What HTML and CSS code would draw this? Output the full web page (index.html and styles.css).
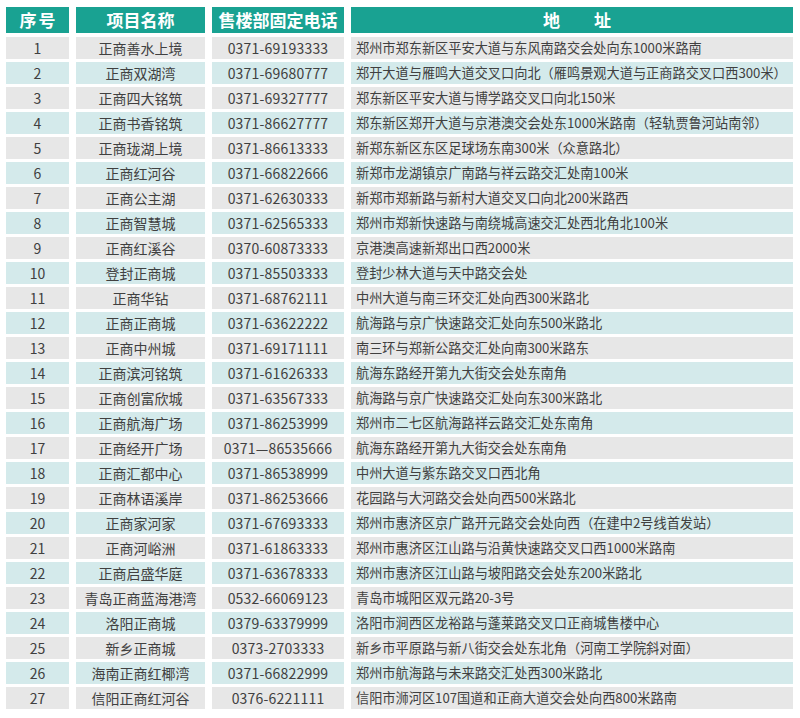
FILE: index.html
```html
<!DOCTYPE html>
<html lang="zh">
<head>
<meta charset="utf-8">
<link rel="stylesheet" href="styles.css">
</head>
<body>
<div class="sheet">
  <div class="row head">
    <div class="c num">序号</div>
    <div class="c">项目名称</div>
    <div class="c">售楼部固定电话</div>
    <div class="c addr-h">地　　址</div>
  </div>
  <div class="row g"><div class="c num">1</div><div class="c">正商善水上境</div><div class="c tel">0371-69193333</div><div class="c addr">郑州市郑东新区平安大道与东风南路交会处向东1000米路南</div></div>
  <div class="row b"><div class="c num">2</div><div class="c">正商双湖湾</div><div class="c tel">0371-69680777</div><div class="c addr">郑开大道与雁鸣大道交叉口向北（雁鸣景观大道与正商路交叉口西300米）</div></div>
  <div class="row g"><div class="c num">3</div><div class="c">正商四大铭筑</div><div class="c tel">0371-69327777</div><div class="c addr">郑东新区平安大道与博学路交叉口向北150米</div></div>
  <div class="row b"><div class="c num">4</div><div class="c">正商书香铭筑</div><div class="c tel">0371-86627777</div><div class="c addr">郑东新区郑开大道与京港澳交会处东1000米路南（轻轨贾鲁河站南邻）</div></div>
  <div class="row g"><div class="c num">5</div><div class="c">正商珑湖上境</div><div class="c tel">0371-86613333</div><div class="c addr">新郑东新区东区足球场东南300米（众意路北）</div></div>
  <div class="row b"><div class="c num">6</div><div class="c">正商红河谷</div><div class="c tel">0371-66822666</div><div class="c addr">新郑市龙湖镇京广南路与祥云路交汇处南100米</div></div>
  <div class="row g"><div class="c num">7</div><div class="c">正商公主湖</div><div class="c tel">0371-62630333</div><div class="c addr">新郑市郑新路与新村大道交叉口向北200米路西</div></div>
  <div class="row b"><div class="c num">8</div><div class="c">正商智慧城</div><div class="c tel">0371-62565333</div><div class="c addr">郑州市郑新快速路与南绕城高速交汇处西北角北100米</div></div>
  <div class="row g"><div class="c num">9</div><div class="c">正商红溪谷</div><div class="c tel">0370-60873333</div><div class="c addr">京港澳高速新郑出口西2000米</div></div>
  <div class="row b"><div class="c num">10</div><div class="c">登封正商城</div><div class="c tel">0371-85503333</div><div class="c addr">登封少林大道与天中路交会处</div></div>
  <div class="row g"><div class="c num">11</div><div class="c">正商华钻</div><div class="c tel">0371-68762111</div><div class="c addr">中州大道与南三环交汇处向西300米路北</div></div>
  <div class="row b"><div class="c num">12</div><div class="c">正商正商城</div><div class="c tel">0371-63622222</div><div class="c addr">航海路与京广快速路交汇处向东500米路北</div></div>
  <div class="row g"><div class="c num">13</div><div class="c">正商中州城</div><div class="c tel">0371-69171111</div><div class="c addr">南三环与郑新公路交汇处向南300米路东</div></div>
  <div class="row b"><div class="c num">14</div><div class="c">正商滨河铭筑</div><div class="c tel">0371-61626333</div><div class="c addr">航海东路经开第九大街交会处东南角</div></div>
  <div class="row g"><div class="c num">15</div><div class="c">正商创富欣城</div><div class="c tel">0371-63567333</div><div class="c addr">航海路与京广快速路交汇处向东300米路北</div></div>
  <div class="row b"><div class="c num">16</div><div class="c">正商航海广场</div><div class="c tel">0371-86253999</div><div class="c addr">郑州市二七区航海路祥云路交汇处东南角</div></div>
  <div class="row g"><div class="c num">17</div><div class="c">正商经开广场</div><div class="c tel">0371—86535666</div><div class="c addr">航海东路经开第九大街交会处东南角</div></div>
  <div class="row b"><div class="c num">18</div><div class="c">正商汇都中心</div><div class="c tel">0371-86538999</div><div class="c addr">中州大道与紫东路交叉口西北角</div></div>
  <div class="row g"><div class="c num">19</div><div class="c">正商林语溪岸</div><div class="c tel">0371-86253666</div><div class="c addr">花园路与大河路交会处向西500米路北</div></div>
  <div class="row b"><div class="c num">20</div><div class="c">正商家河家</div><div class="c tel">0371-67693333</div><div class="c addr">郑州市惠济区京广路开元路交会处向西（在建中2号线首发站）</div></div>
  <div class="row g"><div class="c num">21</div><div class="c">正商河峪洲</div><div class="c tel">0371-61863333</div><div class="c addr">郑州市惠济区江山路与沿黄快速路交叉口西1000米路南</div></div>
  <div class="row b"><div class="c num">22</div><div class="c">正商启盛华庭</div><div class="c tel">0371-63678333</div><div class="c addr">郑州市惠济区江山路与坡阳路交会处东200米路北</div></div>
  <div class="row g"><div class="c num">23</div><div class="c">青岛正商蓝海港湾</div><div class="c tel">0532-66069123</div><div class="c addr">青岛市城阳区双元路20-3号</div></div>
  <div class="row b"><div class="c num">24</div><div class="c">洛阳正商城</div><div class="c tel">0379-63379999</div><div class="c addr">洛阳市涧西区龙裕路与蓬莱路交叉口正商城售楼中心</div></div>
  <div class="row g"><div class="c num">25</div><div class="c">新乡正商城</div><div class="c tel">0373-2703333</div><div class="c addr">新乡市平原路与新八街交会处东北角（河南工学院斜对面）</div></div>
  <div class="row b"><div class="c num">26</div><div class="c">海南正商红椰湾</div><div class="c tel">0371-66822999</div><div class="c addr">郑州市航海路与未来路交汇处西300米路北</div></div>
  <div class="row g"><div class="c num">27</div><div class="c">信阳正商红河谷</div><div class="c tel">0376-6221111</div><div class="c addr">信阳市浉河区107国道和正商大道交会处向西800米路南</div></div>
</div>
</body>
</html>
```

FILE: styles.css
```css
html, body {
  margin: 0;
  padding: 0;
  background: #ffffff;
}
body {
  font-family: "Noto Sans CJK SC", "Noto Sans", sans-serif;
  color: #404040;
}
.sheet {
  padding: 7px 0 0 6px;
  display: flex;
  flex-direction: column;
  gap: 3px;
  width: 787px;
}
.row {
  display: grid;
  grid-template-columns: 63px 129px 132px 442px;
  column-gap: 7px;
}
.c {
  height: 22px;
  line-height: 22px;
  text-align: center;
  font-size: 14px;
  white-space: nowrap;
  overflow: hidden;
}
.head {
  margin-bottom: 1px;
}
.head .c {
  height: 26px;
  line-height: 26px;
  background: #19a292;
  color: #ffffff;
  font-weight: bold;
  font-size: 17px;
}
.head .num {
  letter-spacing: 2px;
  text-indent: 2px;
}
.head .addr-h {
  text-align: center;
  padding-left: 10px;
}
.g .c {
  background: #e7e7e7;
}
.b .c {
  background: #d4eaeb;
}
.tel {
  letter-spacing: 0.2px;
}
.addr {
  text-align: left;
  padding-left: 5px;
  font-size: 13.2px;
}
```
